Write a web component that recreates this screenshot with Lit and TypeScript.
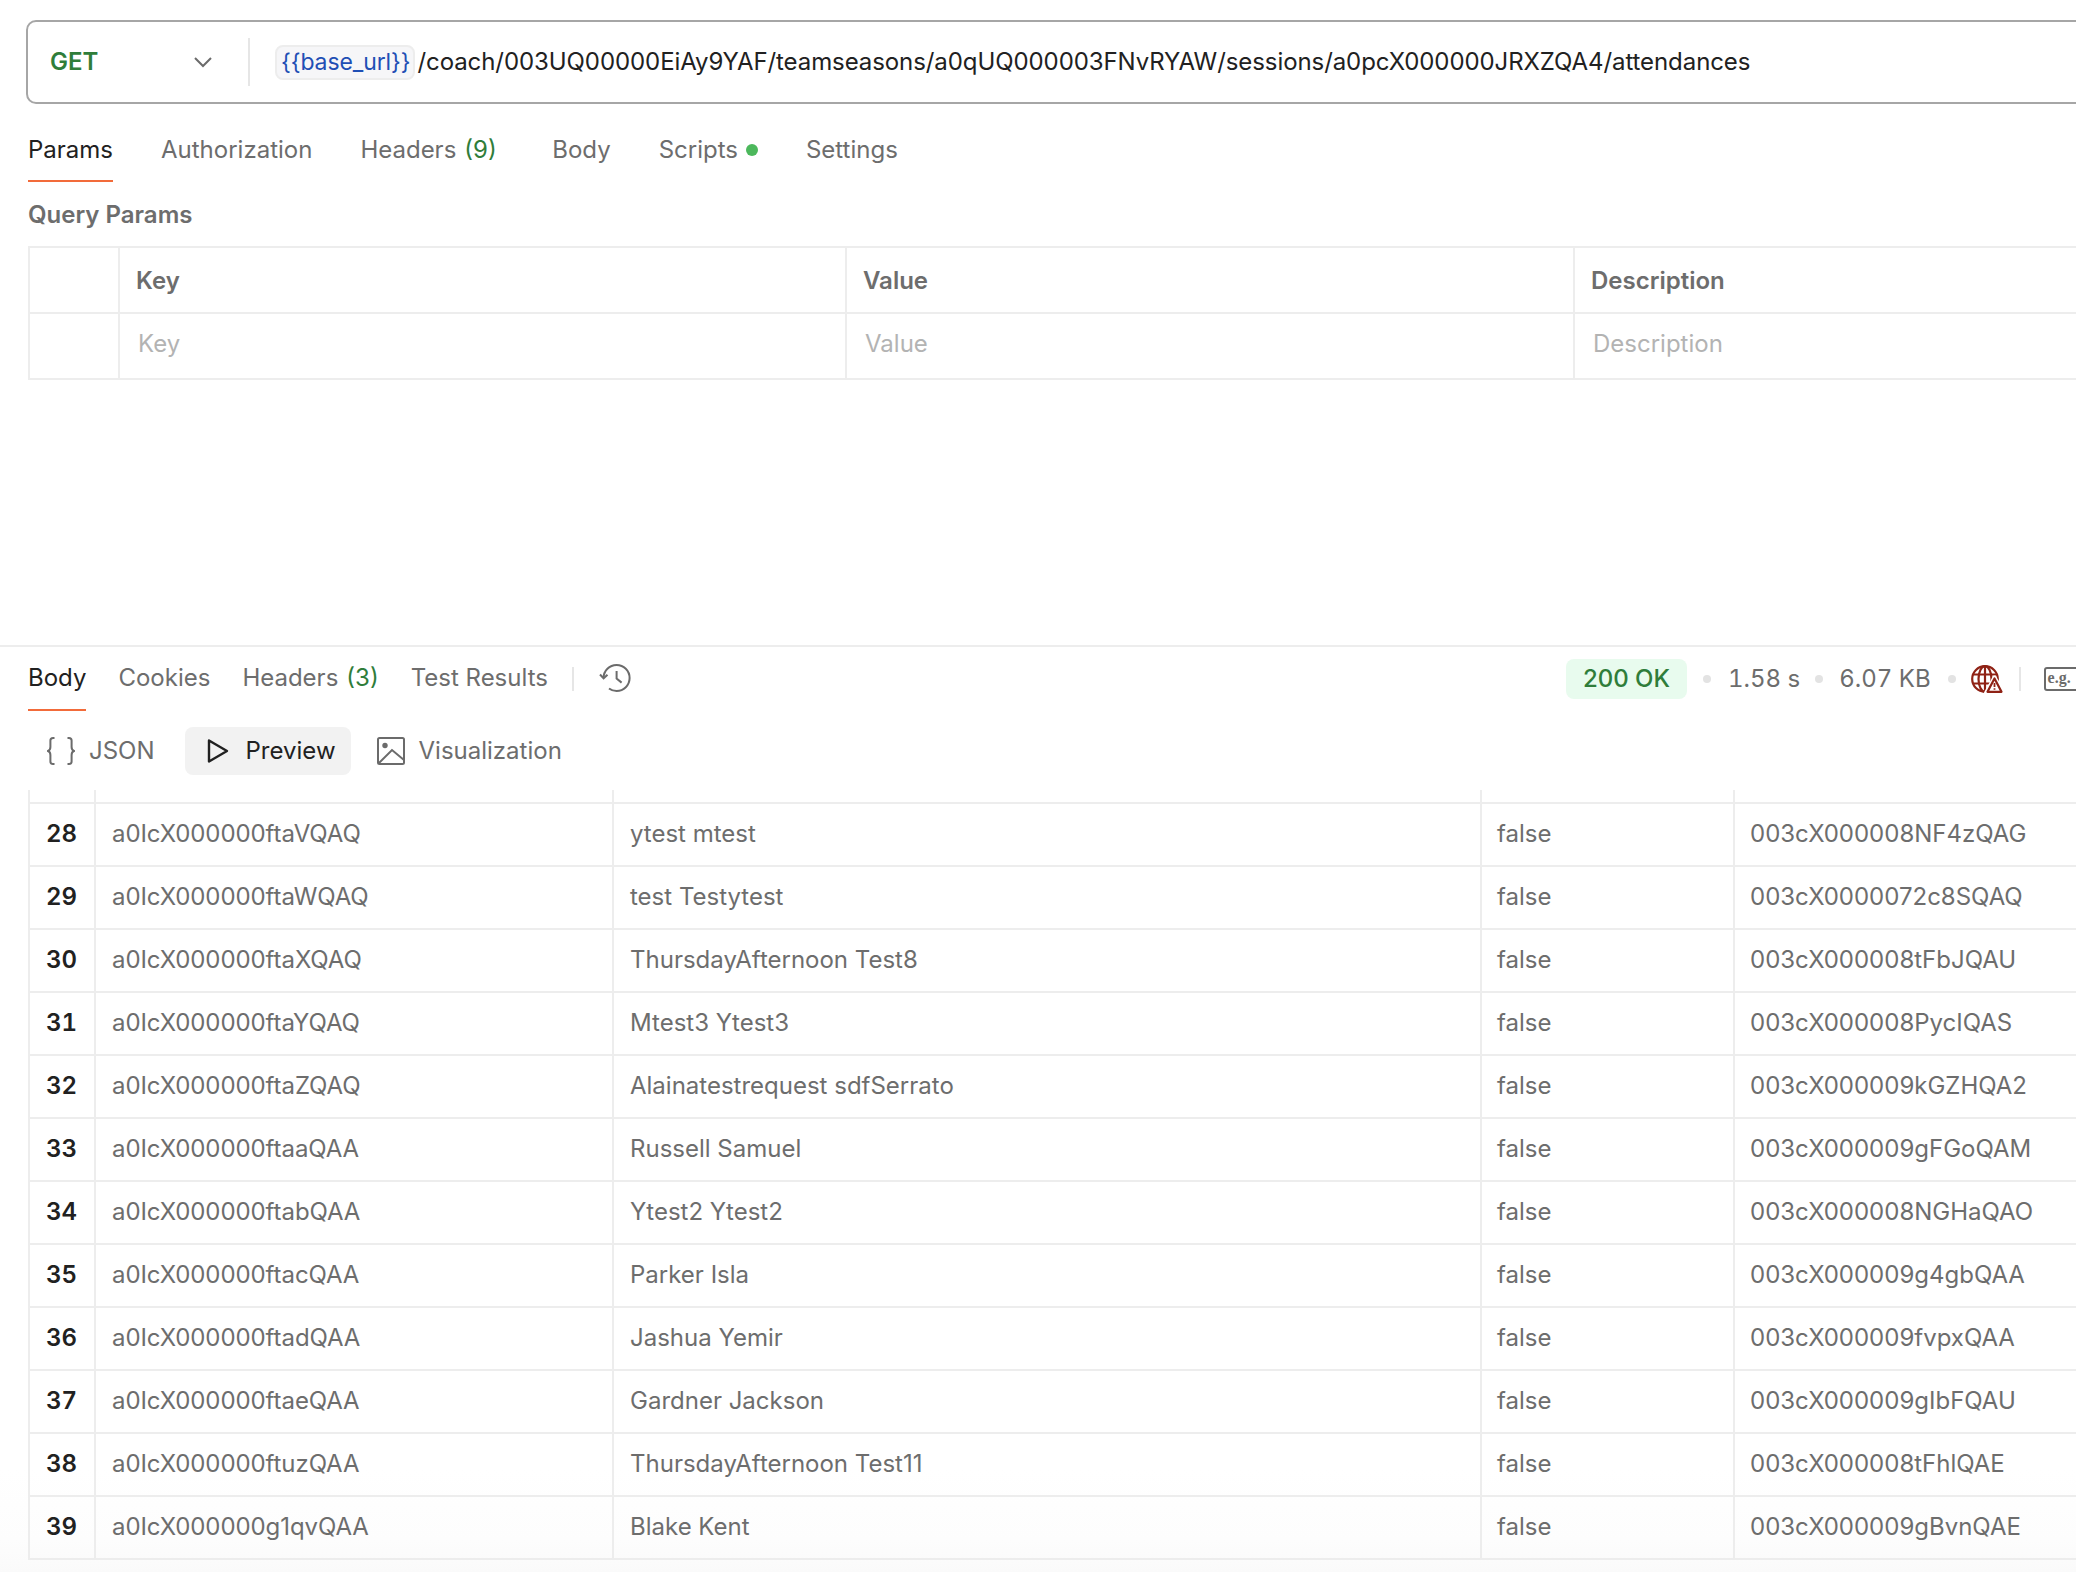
import { LitElement, html, css } from "lit";
import { customElement } from "lit/decorators.js";

const ROWS: [number, string, string, string][] = [
  [28, "a0IcX000000ftaVQAQ", "ytest mtest", "003cX000008NF4zQAG"],
  [29, "a0IcX000000ftaWQAQ", "test Testytest", "003cX0000072c8SQAQ"],
  [30, "a0IcX000000ftaXQAQ", "ThursdayAfternoon Test8", "003cX000008tFbJQAU"],
  [31, "a0IcX000000ftaYQAQ", "Mtest3 Ytest3", "003cX000008PycIQAS"],
  [32, "a0IcX000000ftaZQAQ", "Alainatestrequest sdfSerrato", "003cX000009kGZHQA2"],
  [33, "a0IcX000000ftaaQAA", "Russell Samuel", "003cX000009gFGoQAM"],
  [34, "a0IcX000000ftabQAA", "Ytest2 Ytest2", "003cX000008NGHaQAO"],
  [35, "a0IcX000000ftacQAA", "Parker Isla", "003cX000009g4gbQAA"],
  [36, "a0IcX000000ftadQAA", "Jashua Yemir", "003cX000009fvpxQAA"],
  [37, "a0IcX000000ftaeQAA", "Gardner Jackson", "003cX000009gIbFQAU"],
  [38, "a0IcX000000ftuzQAA", "ThursdayAfternoon Test11", "003cX000008tFhlQAE"],
  [39, "a0IcX000000g1qvQAA", "Blake Kent", "003cX000009gBvnQAE"],
];

const chevron = html`<svg class="chev" width="18" height="11" viewBox="0 0 18 11" fill="none" stroke="#6b6b6b" stroke-width="2"><path d="M1 1l8 8 8-8"/></svg>`;

const globe = html`<svg class="ico" width="32" height="28" viewBox="0 0 32 28" fill="none" stroke="#8f2215" stroke-width="2.2">
  <circle cx="14" cy="14" r="12.8"/>
  <ellipse cx="14" cy="14" rx="6.5" ry="12.8"/>
  <path d="M14 1.200v25.600M2.600 9.500h22.800M2.600 18.500h22.800"/>
  <path d="M23.500 12.500L32 28H15z" fill="#fff" stroke="#fff" stroke-width="4" stroke-linejoin="round"/>
  <path d="M23.500 13.500L30.500 26.800H16.500z" fill="#fff" stroke-width="2.200" stroke-linejoin="round"/>
  <path d="M23.500 18v4M23.500 23.200v1.600" stroke-width="1.800"/>
</svg>`;

const history = html`<svg class="ico" width="32" height="28" viewBox="0 0 32 28" fill="none" stroke="#6b6b6b" stroke-width="2">
  <path d="M4.600 14A13 13 0 1 1 17.600 27c-2.900 0-5.500-.9-7.600-2.500"/>
  <path d="M1 10.500l3.600 3.800 3.900-3.600"/>
  <path d="M17.600 7v7.600l5 4"/>
</svg>`;

const braces = html`<svg class="ico" width="28" height="28" viewBox="0 0 28 28" fill="none" stroke="#6b6b6b" stroke-width="2">
  <path d="M7.500 1H6C4.300 1 3.400 2 3.400 3.600V10c0 2-.9 3.400-2.400 4 1.500.6 2.400 2 2.400 4v6.400C3.400 26 4.300 27 6 27h1.500"/>
  <path d="M20.500 1H22c1.700 0 2.600 1 2.600 2.600V10c0 2 .9 3.400 2.400 4-1.500.6-2.400 2-2.400 4v6.400C24.600 26 23.700 27 22 27h-1.500"/>
</svg>`;

const play = html`<svg class="ico" width="22" height="26" viewBox="0 0 22 26" fill="none" stroke="#212121" stroke-width="2.400" stroke-linejoin="round"><path d="M2 2.500L20 13 2 23.500z"/></svg>`;

const image = html`<svg class="ico" width="28" height="28" viewBox="0 0 28 28" fill="none" stroke="#6b6b6b" stroke-width="2">
  <rect x="1" y="1" width="26" height="26" rx="1.500"/>
  <path d="M1.500 26.500L15 13l12 10"/>
  <circle cx="8" cy="8.500" r="2.700" fill="#6b6b6b" stroke="none"/>
</svg>`;

@customElement("app-root")
export class AppRoot extends LitElement {
  static styles = css`
    :host {
      display: block;
      width: 2076px;
      height: 1572px;
      overflow: hidden;
      background: linear-gradient(to bottom, #fff 1470px, #fdfdfd 1540px, #fafafa 1572px);
      font-family: Inter, "Liberation Sans", sans-serif;
      font-size: 24px;
      line-height: 32px;
      color: #6d6d6d;
    }
    .ico, .chev { display: block; flex: none; }
    .url {
      display: flex;
      align-items: center;
      box-sizing: border-box;
      width: 2300px;
      height: 84px;
      margin: 20px 0 0 26px;
      border: 2px solid #a6a6a6;
      border-radius: 10px;
      background: #fff;
    }
    .method {
      display: flex;
      align-items: center;
      justify-content: space-between;
      box-sizing: border-box;
      width: 220px;
      padding: 0 36px 0 22px;
      color: #2f7d3a;
      font-weight: 600;
    }
    .vr { width: 2px; height: 48px; background: #e6e6e6; flex: none; }
    .var {
      box-sizing: border-box;
      display: flex;
      align-items: center;
      margin: 0 2px 0 25px;
      padding: 0 3px 0 4px;
      height: 35px;
      font-size: 23px;
      letter-spacing: -0.1px;
      border: 2px solid #ededed;
      border-radius: 8px;
      background: #f6f6f8;
      color: #1f4fb5;
      white-space: nowrap;
    }
    .path { color: #212121; white-space: nowrap; letter-spacing: -0.08px; }

    .tabs { display: flex; gap: 48px; }
    .tab {
      display: flex;
      align-items: center;
      padding-bottom: 14px;
      border-bottom: 2px solid transparent;
      white-space: nowrap;
    }
    .tab.on { color: #212121; border-bottom-color: #f26b3a; }
    .count { color: #2f7d3a; margin-left: 8px; }
    .req { margin: 30px 0 0 28px; }
    .pad-r { margin-right: 7.500px; }
    .dot { width: 12px; height: 12px; border-radius: 50%; background: #4cb85c; margin-left: 8px; }

    h2 { margin: 17px 0 0 28px; font: inherit; font-weight: 600; }

    .params {
      display: grid;
      grid-template-columns: 90px 727px 728px 600px;
      width: 2145px;
      margin: 15px 0 0 28px;
      border-bottom: 2px solid #ededed;
    }
    .params > div {
      box-sizing: border-box;
      height: 66px;
      display: flex;
      align-items: center;
      border-top: 2px solid #ededed;
      border-left: 2px solid #ededed;
    }
    .params .th { font-weight: 600; padding: 2px 0 0 16px; }
    .params .ph { color: #b3b3b3; padding: 0 0 5px 18px; }

    .res {
      margin-top: 265px;
      border-top: 2px solid #ededed;
    }
    .res-head { display: flex; align-items: flex-start; padding: 12px 0 0 28px; width: 2200px; }
    .res-tabs { display: flex; align-items: flex-start; gap: 32px; margin-top: 3px; }
    .res-tabs .tab { padding-bottom: 15px; }
    .res-tabs .vr, .status .vr { width: 2px; height: 24px; background: #e6e6e6; }
    .res-tabs .vr { margin-top: 5px; margin-left: -8px; margin-right: -6px; }
    .res-tabs .ico { margin-top: 2px; }
    .res-tabs .hist { margin-left: -1px; }

    .status { display: flex; align-items: center; height: 40px; margin-left: 935px; white-space: nowrap; }
    .ok {
      box-sizing: border-box;
      width: 121px;
      height: 40px;
      border-radius: 8px;
      background: #e8fbee;
      color: #2f7d3a;
      font-weight: 500;
      display: flex;
      align-items: center;
      justify-content: center;
    }
    .metric { font-variant-numeric: tabular-nums; }
    .sep { width: 8px; height: 8px; border-radius: 50%; background: #e3e3e3; margin: 0 17px 0 16px; flex: none; }
    .sep.b { margin: 0 16px 0 15px; }
    .sep.c { margin: 0 15px 0 17px; }
    .status .globe { margin-right: 16px; }
    .eg {
      box-sizing: border-box;
      width: 40px;
      height: 24px;
      margin-left: 23px;
      border: 2px solid #6b6b6b;
      border-radius: 3px;
      color: #6b6b6b;
      font: 700 16px/18px "Liberation Serif", serif;
      padding-left: 2px;
      flex: none;
    }

    .modes { display: flex; align-items: center; margin: 16px 0 0 28px; height: 48px; }
    .mode { display: flex; align-items: center; gap: 14px; height: 48px; }
    .json { margin-left: 19px; }
    .pill {
      box-sizing: border-box;
      width: 166px;
      margin-left: 30px;
      padding-left: 22px;
      gap: 17px;
      border-radius: 8px;
      background: #f2f2f2;
      color: #212121;
    }
    .vis { margin-left: 26px; }

    .data { margin: 15px 0 0 28px; width: 2200px; }
    .row { display: grid; grid-template-columns: 66px 518px 868px 253px 495px; }
    .row > div {
      box-sizing: border-box;
      height: 63px;
      display: flex;
      align-items: center;
      padding: 0 0 1px 15px;
      border-top: 2px solid #ededed;
      border-left: 2px solid #ededed;
      white-space: nowrap;
    }
    .row > div:nth-child(2), .row > div:nth-child(3) { padding-left: 16px; }
    .row > div:nth-child(2) { letter-spacing: -0.08px; }
    .row.stub > div { height: 12px; border-top: 0; padding: 0; }
    .row .n { color: #212121; font-weight: 600; padding-left: 16px; font-variant-numeric: tabular-nums; }
    .end { height: 2px; background: #ededed; }
  `;

  render() {
    return html`
      <div class="url">
        <div class="method"><span>GET</span>${chevron}</div>
        <div class="vr"></div>
        <span class="var">{{base_url}}</span>
        <span class="path">/coach/003UQ00000EiAy9YAF/teamseasons/a0qUQ000003FNvRYAW/sessions/a0pcX000000JRXZQA4/attendances</span>
      </div>

      <div class="tabs req">
        <div class="tab on">Params</div>
        <div class="tab">Authorization</div>
        <div class="tab pad-r">Headers<span class="count">(9)</span></div>
        <div class="tab">Body</div>
        <div class="tab">Scripts<span class="dot"></span></div>
        <div class="tab">Settings</div>
      </div>

      <h2>Query Params</h2>
      <div class="params">
        <div></div><div class="th">Key</div><div class="th">Value</div><div class="th">Description</div>
        <div></div><div class="ph">Key</div><div class="ph">Value</div><div class="ph">Description</div>
      </div>

      <div class="res">
        <div class="res-head">
          <div class="res-tabs">
            <div class="tab on">Body</div>
            <div class="tab">Cookies</div>
            <div class="tab">Headers<span class="count">(3)</span></div>
            <div class="tab">Test Results</div>
            <div class="vr"></div>
            <div class="hist">${history}</div>
          </div>
          <div class="status">
            <div class="ok">200 OK</div>
            <span class="sep"></span><span class="metric">1.58 s</span>
            <span class="sep b"></span><span class="metric">6.07 KB</span>
            <span class="sep c"></span><span class="globe">${globe}</span>
            <div class="vr"></div>
            <div class="eg">e.g.</div>
          </div>
        </div>

        <div class="modes">
          <div class="mode json">${braces}<span>JSON</span></div>
          <div class="mode pill">${play}<span>Preview</span></div>
          <div class="mode vis">${image}<span>Visualization</span></div>
        </div>

        <div class="data">
          <div class="row stub"><div></div><div></div><div></div><div></div><div></div></div>
          ${ROWS.map(
            ([n, id, name, contact]) => html`
              <div class="row">
                <div class="n">${n}</div>
                <div>${id}</div>
                <div>${name}</div>
                <div>false</div>
                <div>${contact}</div>
              </div>
            `
          )}
          <div class="end"></div>
        </div>
      </div>
    `;
  }
}
